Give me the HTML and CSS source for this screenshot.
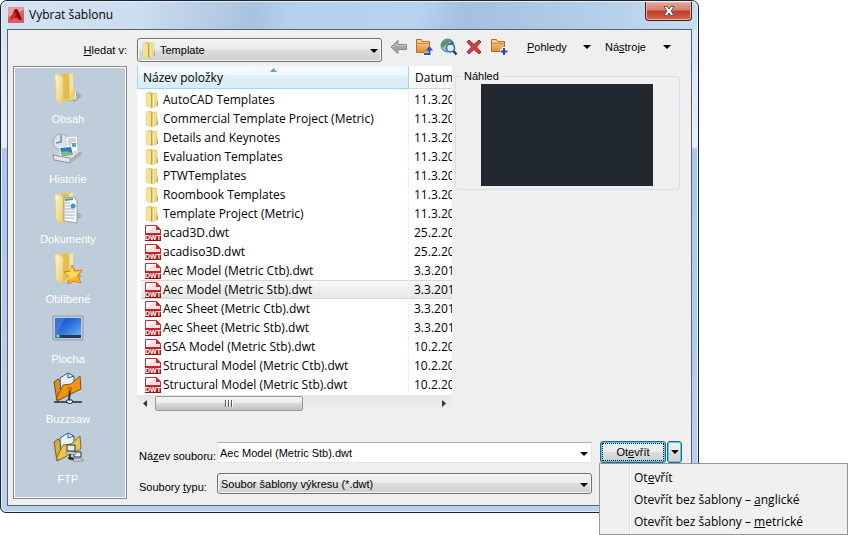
FILE: index.html
```html
<!DOCTYPE html>
<html lang="cs">
<head>
    <meta charset="UTF-8">
    <meta name="viewport" content="width=device-width, initial-scale=1.0">
    <title>Vybrat šablonu</title>
    <link rel="stylesheet" href="styles.css">
</head>
<body>

    <!-- Shared icons -->
    <svg class="sprite" width="0" height="0" aria-hidden="true">
        <defs>
            <linearGradient id="gold" x1="0" y1="0" x2="1" y2="0">
                <stop offset="0" stop-color="#f9edb0"/>
                <stop offset="0.45" stop-color="#dfc057"/>
                <stop offset="1" stop-color="#f7e9a6"/>
            </linearGradient>
            <linearGradient id="front" x1="0" y1="0" x2="1" y2="1">
                <stop offset="0" stop-color="#fdf6cf"/>
                <stop offset="1" stop-color="#e9cc6d"/>
            </linearGradient>
            <linearGradient id="orange" x1="0" y1="0" x2="0" y2="1">
                <stop offset="0" stop-color="#fbd79b"/>
                <stop offset="1" stop-color="#dc8b35"/>
            </linearGradient>
            <linearGradient id="red" x1="0" y1="0" x2="0" y2="1">
                <stop offset="0" stop-color="#c8272d"/>
                <stop offset="1" stop-color="#8e1014"/>
            </linearGradient>
            <linearGradient id="screen" x1="0" y1="0" x2="1" y2="1">
                <stop offset="0" stop-color="#1447b8"/>
                <stop offset="0.5" stop-color="#2f74e0"/>
                <stop offset="1" stop-color="#7db8fa"/>
            </linearGradient>
        </defs>
        <symbol id="folder" viewBox="0 0 16 16">
            <path d="M1 1l5-1 1 1h5v13l-5 2-6-2z" fill="url(#gold)" stroke="#d8bd62" stroke-width=".5"/>
            <path d="M1 1l5 1v14l-5-2z" fill="#f3e293"/>
            <path d="M6.500 2v13" stroke="#c39f38"/>
            <path d="M8.500 2v13" stroke="#fdf6cc"/>
            <path d="M11 7l2 1v6l-4 1.500z" fill="#ead37b"/>
            <path d="M12.500 10v4" stroke="#6db4dc"/>
        </symbol>
        <symbol id="dwt" viewBox="0 0 16 16">
            <path d="M.5.500h11l4 4v11H.5z" fill="#f6dfe0" stroke="#b5353a"/>
            <path d="M11 0v5h5z" fill="#d8272d"/>
            <path d="M1 1h9L1 7z" fill="#fff"/>
            <path d="M0 8h16v8H0z" fill="url(#red)"/>
            <text x="8" y="15" text-anchor="middle" class="dwt-text">DWT</text>
        </symbol>
        <symbol id="big-folder" viewBox="0 0 32 32">
            <path d="M14 28l9 2 7-6-6-5z" fill="#8797a8" opacity=".55"/>
            <path d="M4 2l16-1v25l-10 5-6-4z" fill="url(#gold)"/>
            <path d="M12 2l9-1v24l-9 3z" fill="#e1bd52"/>
            <path d="M17 2l4-1v22l-3 3z" fill="#f5e4a0"/>
            <path d="M3 2l8 3v27l-7-4z" fill="url(#front)" stroke="#e0c46e" stroke-width=".5"/>
            <path d="M21 17l3 2v8l-6 2v-5z" fill="#ecd073"/>
            <path d="M23.500 21v6" stroke="#fff"/>
        </symbol>
        <symbol id="arrow" viewBox="0 0 8 4">
            <path d="M0 0h8L4 4z" fill="#000"/>
        </symbol>
    </svg>

    <div class="dialog">
        <div class="titlebar">
            <svg class="logo" viewBox="0 0 16 16">
                <rect width="16" height="16" fill="#dd5a5e"/>
                <path d="M0 0h16v3L0 10z" fill="#e99a9b"/>
                <path d="M2 13L6.500 2.500h3L14 13h-3l-2-2H6z" fill="#b3171c"/>
                <path d="M2 13l4.500-8L8 8l-2 3z" fill="#d32a2e"/>
                <path d="M6.500 2.500h3L14 13l-4-2z" fill="#7c0b0f"/>
            </svg>
            <h1>Vybrat šablonu</h1>
            <button type="button" class="close" aria-label="Zavřít">
                <svg width="12" height="10" viewBox="0 0 12 10">
                    <path d="M1 .5h3l2 2.500 2-2.500h3L8 5l3 4.500H8L6 7 4 9.500H1L4 5z" fill="#fff" stroke="#5d5b66"/>
                </svg>
            </button>
        </div>

        <div class="client">
            <label class="look-label" for="look"><u>H</u>ledat v:</label>
            <div class="toolbar">
                <div class="combo look">
                    <select id="look">
                        <option>Template</option>
                    </select>
                    <svg class="combo-icon" width="16" height="16"><use href="#folder"/></svg>
                    <svg class="combo-arrow"><use href="#arrow"/></svg>
                </div>
                <div class="tools">
                    <button type="button" aria-label="Zpět">
                        <svg width="18" height="16" viewBox="0 0 18 16"><path d="M1 8l7-6.500v4h8.500v5H8v4z" fill="#a5a5a5" stroke="#868686"/><path d="M3 8l4-3.500v2h9" fill="none" stroke="#c8c8c8"/></svg>
                    </button>
                    <button type="button" aria-label="O úroveň výš">
                        <svg width="18" height="18" viewBox="0 0 18 18"><path d="M1.500 14.500v-13h5l1 2h7v11z" fill="url(#orange)" stroke="#b96a24"/><path d="M2 5.500h12" stroke="#c98645"/><path d="M9 16.500h6v-4" fill="none" stroke="#fff" stroke-width="4"/><path d="M9 16h5.500v-4" fill="none" stroke="#2853b5" stroke-width="2"/><path d="M11 12.500L14.500 8l3.500 4.500z" fill="#2853b5"/></svg>
                    </button>
                    <button type="button" aria-label="Hledat na webu">
                        <svg width="18" height="18" viewBox="0 0 18 18"><circle cx="7.500" cy="7.500" r="6.500" fill="#97b9dd" stroke="#5d7faf"/><path d="M3 4l4-3 3 2-2 3-3 1-2 3-2-3z" fill="#539557"/><path d="M10 1l4 4-3 2z" fill="#3f7d50"/><circle cx="10.500" cy="10" r="4" fill="#dcecfb" stroke="#46658f" stroke-width="1.500"/><path d="M13.500 13l3 3.500" stroke="#173a80" stroke-width="2.500"/></svg>
                    </button>
                    <button type="button" aria-label="Odstranit">
                        <svg width="16" height="16" viewBox="0 0 16 16"><path d="M1 3l2-2 5 4.500L13 1l2 2-4.500 5 4.500 5-2 2-5-4.500L3 15l-2-2 4.500-5z" fill="#cf4146" stroke="#9e2c31"/></svg>
                    </button>
                    <button type="button" aria-label="Nová složka">
                        <svg width="18" height="18" viewBox="0 0 18 18"><path d="M1.500 13.500v-12h5l1 2h7v10z" fill="url(#orange)" stroke="#b96a24"/><path d="M2 5.500h12" stroke="#c98645"/><path d="M14 9v8M10 13h8" stroke="#fff" stroke-width="4"/><path d="M14 10v7M10.500 13.500h7" stroke="#2447a3" stroke-width="2"/></svg>
                    </button>
                </div>
                <button type="button" class="drop views"><span><u>P</u>ohledy</span><svg><use href="#arrow"/></svg></button>
                <button type="button" class="drop"><span>Ná<u>s</u>troje</span><svg><use href="#arrow"/></svg></button>
            </div>

            <nav class="places">
                <button type="button">
                    <svg viewBox="0 0 32 32"><use href="#big-folder"/></svg>
                    <span>Obsah</span>
                </button>
                <button type="button">
                    <svg viewBox="0 0 32 32">
                        <circle cx="9" cy="10" r="8" fill="#d9e5ee" stroke="#a9b8c3" stroke-width="1.500"/>
                        <path d="M9 3v7l-5 1" fill="none" stroke="#7a8b99" stroke-width="1.500"/>
                        <path d="M14 5l11-1 1 18-11 2z" fill="#fff" stroke="#a7afb6" stroke-width=".5"/>
                        <path d="M16 7h7M16 9h8M16 11h4M16 13h3" stroke="#a1a8b2"/>
                        <path d="M20 11h4v4h-4z" fill="#52a8b4"/>
                        <path d="M2 24l24-5 4 2-9 8-3 2L2 28z" fill="#8f979b"/>
                        <path d="M2 23l7-4h20l-10 8z" fill="#d3d8da"/>
                        <path d="M7 15l13-1 2 10-13 1z" fill="#fff"/>
                        <path d="M8 16l11-1 2 8-11 1z" fill="#287fc8"/>
                        <path d="M9 20l6-1 5 2 1 2-11 1z" fill="#88bc74"/>
                        <path d="M1 23l17 3v5L2 28z" fill="#e4e7e8" stroke="#8c9498"/>
                        <path d="M18 27l11-7v3l-11 8z" fill="#aab1b5"/>
                    </svg>
                    <span>Historie</span>
                </button>
                <button type="button">
                    <svg viewBox="0 0 32 32">
                        <use href="#big-folder"/>
                        <path d="M12 6l10-1 3 4v22l-13-2z" fill="#fafbfb" stroke="#9b9ea0"/>
                        <path d="M13 8l8-1" stroke="#4e9a8e" stroke-width="2"/>
                        <path d="M13 11h5M13 14h5M13 17h10M13 20h10M13 23h10M13 26h9" stroke="#a4b1ba"/>
                        <circle cx="21" cy="14" r="2.500" fill="#4695c8"/>
                    </svg>
                    <span>Dokumenty</span>
                </button>
                <button type="button">
                    <svg viewBox="0 0 32 32">
                        <use href="#big-folder"/>
                        <path d="M20 13l3 6 7-1-4 6 3 7-7-2-6 3 1-7-5-5 7-1z" fill="#ffb52b" stroke="#d97a15"/>
                        <path d="M20 15l2 6 6-2-4 5-8 4 1-4-4-3 5-1z" fill="#ffdc65"/>
                    </svg>
                    <span>Oblíbené</span>
                </button>
                <button type="button">
                    <svg viewBox="0 0 32 32">
                        <path d="M1 4h30v24H1z" fill="#c4cad8" stroke="#8f99b0"/>
                        <path d="M3 6h26v20H3z" fill="url(#screen)"/>
                        <path d="M3 6h10L5 22H3z" fill="#5d92eb" opacity=".5"/>
                        <path d="M3 23h26v3H3z" fill="#263b58"/>
                        <circle cx="5.500" cy="24" r="2.500" fill="#2f9bb6"/>
                        <path d="M5 23h2v2H5z" fill="#c4d34a"/>
                    </svg>
                    <span>Plocha</span>
                </button>
                <button type="button">
                    <svg viewBox="0 0 32 32">
                        <path d="M2 10l4-3 2 2 4-1v17l-7 4z" fill="#d9901f" stroke="#7c4b0c"/>
                        <path d="M8 6l8-5 6 3v14L9 24z" fill="#e7f2f8" stroke="#31627c"/>
                        <path d="M16 1v5l6-2" fill="none" stroke="#31627c"/>
                        <path d="M28 4l1 13-22 11-3-1 7-14 8-1z" fill="#f09413" stroke="#89500c"/>
                        <path d="M18 17l-1 11" stroke="#273a66" stroke-width="2"/>
                        <path d="M16 15h4v4h-4z" fill="#c47212"/>
                        <path d="M2 30h28" stroke="#15294f" stroke-width="1.500"/>
                        <path d="M15 28h5l1 2-3 2-4-2z" fill="#eef2f4" stroke="#222"/>
                    </svg>
                    <span>Buzzsaw</span>
                </button>
                <button type="button">
                    <svg viewBox="0 0 32 32">
                        <path d="M2 10l4-3 2 2 4-1v17l-7 4z" fill="#d8ad35" stroke="#79601b"/>
                        <path d="M8 6l8-5 6 3v14L9 24z" fill="#e7f2f8" stroke="#31627c"/>
                        <path d="M16 1v5l6-2" fill="none" stroke="#31627c"/>
                        <path d="M28 4l1 13-22 11-3-1 7-14 8-1z" fill="#e9c552" stroke="#8a6b1d"/>
                        <path d="M15 13h8v6h-8zM22 20h7v5h-7z" fill="#dfeefa" stroke="#2a3440"/>
                        <path d="M14 20h10v2H14zM21 27h10v2H21z" fill="#eee" stroke="#39424c" stroke-width=".5"/>
                        <path d="M18 22v5h4M16 26h5" fill="none" stroke="#222" stroke-width="1.500"/>
                    </svg>
                    <span>FTP</span>
                </button>
            </nav>

            <div class="main">
                <div class="browse">
                    <div class="files">
                        <div class="files-view">
                            <table>
                                <thead>
                                    <tr>
                                        <th class="sorted">Název položky<svg class="sort" viewBox="0 0 7 4"><path d="M0 4l3.500-4L7 4z" fill="#6aa3c8"/></svg></th>
                                        <th>Datum</th>
                                    </tr>
                                </thead>
                                <tbody>
                                    <tr><td><svg><use href="#folder"/></svg>AutoCAD Templates</td><td>11.3.2015</td></tr>
                                    <tr><td><svg><use href="#folder"/></svg>Commercial Template Project (Metric)</td><td>11.3.2015</td></tr>
                                    <tr><td><svg><use href="#folder"/></svg>Details and Keynotes</td><td>11.3.2015</td></tr>
                                    <tr><td><svg><use href="#folder"/></svg>Evaluation Templates</td><td>11.3.2015</td></tr>
                                    <tr><td><svg><use href="#folder"/></svg>PTWTemplates</td><td>11.3.2015</td></tr>
                                    <tr><td><svg><use href="#folder"/></svg>Roombook Templates</td><td>11.3.2015</td></tr>
                                    <tr><td><svg><use href="#folder"/></svg>Template Project (Metric)</td><td>11.3.2015</td></tr>
                                    <tr><td><svg><use href="#dwt"/></svg>acad3D.dwt</td><td>25.2.2015</td></tr>
                                    <tr><td><svg><use href="#dwt"/></svg>acadiso3D.dwt</td><td>25.2.2015</td></tr>
                                    <tr><td><svg><use href="#dwt"/></svg>Aec Model (Metric Ctb).dwt</td><td>3.3.2015</td></tr>
                                    <tr class="selected"><td><svg><use href="#dwt"/></svg>Aec Model (Metric Stb).dwt</td><td>3.3.2015</td></tr>
                                    <tr><td><svg><use href="#dwt"/></svg>Aec Sheet (Metric Ctb).dwt</td><td>3.3.2015</td></tr>
                                    <tr><td><svg><use href="#dwt"/></svg>Aec Sheet (Metric Stb).dwt</td><td>3.3.2015</td></tr>
                                    <tr><td><svg><use href="#dwt"/></svg>GSA Model (Metric Stb).dwt</td><td>10.2.2015</td></tr>
                                    <tr><td><svg><use href="#dwt"/></svg>Structural Model (Metric Ctb).dwt</td><td>10.2.2015</td></tr>
                                    <tr><td><svg><use href="#dwt"/></svg>Structural Model (Metric Stb).dwt</td><td>10.2.2015</td></tr>
                                </tbody>
                            </table>
                        </div>
                        <div class="scrollbar">
                            <svg viewBox="0 0 4 7"><path d="M4 0v7L0 3.500z" fill="#333"/></svg>
                            <div class="track"><div class="thumb"></div></div>
                            <svg viewBox="0 0 4 7"><path d="M0 0v7l4-3.500z" fill="#333"/></svg>
                        </div>
                    </div>
                    <fieldset class="preview">
                        <legend>Náhled</legend>
                        <div class="preview-image"></div>
                    </fieldset>
                </div>

                <form class="choose">
                    <label for="filename">Ná<u>z</u>ev souboru:</label>
                    <div class="combo">
                        <input type="text" id="filename" value="Aec Model (Metric Stb).dwt">
                        <svg class="combo-arrow"><use href="#arrow"/></svg>
                    </div>
                    <div class="split">
                        <button type="button" class="open"><span>Ot<u>e</u>vřít</span></button>
                        <button type="button" class="open-more" aria-label="Další možnosti"><svg><use href="#arrow"/></svg></button>
                        <div class="menu" role="menu">
                            <button type="button" role="menuitem">Ot<u>e</u>vřít</button>
                            <button type="button" role="menuitem">Otevřít bez šablony – <u>a</u>nglické</button>
                            <button type="button" role="menuitem">Otevřít bez šablony – <u>m</u>etrické</button>
                        </div>
                    </div>
                    <label for="filetype">Soubory <u>t</u>ypu:</label>
                    <div class="combo">
                        <select id="filetype">
                            <option>Soubor šablony výkresu (*.dwt)</option>
                        </select>
                        <svg class="combo-arrow"><use href="#arrow"/></svg>
                    </div>
                </form>
            </div>
        </div>
    </div>

</body>
</html>
```

FILE: styles.css
```css
* {
    box-sizing: border-box;
}
body {
    min-height: 100vh;
    margin: 0;
    padding: 0 149px 22px 0;
    background: #fff;
    color: #000;
    font-family: "Liberation Sans", Arial, sans-serif;
    font-size: 11px;
}
button, input, select {
    margin: 0;
    padding: 0;
    border: none;
    background: none;
    color: inherit;
    font: inherit;
}
svg {
    display: block;
    flex: none;
}
.sprite {
    position: absolute;
}
.dwt-text {
    font: bold 7px "Liberation Sans", sans-serif;
    fill: #fff;
}

/* Window frame */
.dialog {
    padding: 0 6px 6px;
    border: 1px solid #1d2430;
    border-radius: 7px 7px 6px 6px;
    background: linear-gradient(#d3e3f4, #e6eff9 146px, #a9c8e8 148px, #b9d3ee);
    box-shadow: inset 0 0 0 1px #e3eefa;
}
.titlebar {
    display: flex;
    height: 28px;
    margin: 0 -5px;
    padding: 0 0 0 6px;
    background: linear-gradient(100deg, #d3e3f3, #cbddef 20%, #a9c3df 36%, #b6d1ec 42%, #b8d3ee 60%, #a5c0df 66%, #b1cce8 82%, #c6dcf2);
    border-top: 1px solid #e3eefa;
    border-radius: 6px 6px 0 0;
}
.logo {
    width: 16px;
    height: 16px;
    margin-top: 5px;
}
.titlebar h1 {
    flex: 1;
    margin: 0;
    padding-left: 5px;
    font: 12px/26px "Open Sans", sans-serif;
}
.close {
    display: flex;
    align-items: center;
    justify-content: center;
    width: 47px;
    height: 19px;
    margin-right: 5px;
    border: 1px solid #4d1a1c;
    border-top: none;
    border-radius: 0 0 4px 4px;
    background: linear-gradient(#e3a79b, #d57f70 45%, #bd3a26 50%, #d4694a);
    box-shadow: inset 0 0 0 1px #e8b5aa;
}
.client {
    display: grid;
    grid-template-columns: 114px 1fr;
    column-gap: 10px;
    padding: 0 9px 6px 5px;
    border: 1px solid #59636f;
    background: #efefef;
}

/* Top row */
.look-label {
    padding-top: 13px;
    text-align: right;
    line-height: 14px;
}
.toolbar {
    display: flex;
    align-items: center;
    height: 36px;
    padding: 8px 0 4px;
}
.look {
    flex: 1;
}
.tools {
    display: flex;
    gap: 1px;
    margin: -6px 0 0 5px;
}
.tools button {
    display: flex;
    align-items: center;
    justify-content: center;
    width: 24px;
    height: 24px;
}
.drop {
    display: flex;
    align-items: center;
    justify-content: space-between;
    width: 66px;
    margin: -6px 11px 0 0;
}
.views {
    width: 64px;
    margin: -6px 14px 0 16px;
}
.drop svg, .open-more svg, .combo-arrow {
    width: 8px;
    height: 4px;
}

/* Combo boxes */
.combo {
    position: relative;
}
.combo select, .combo input {
    display: block;
    width: 100%;
    height: 21px;
    padding-left: 3px;
    appearance: none;
}
.combo select {
    border: 1px solid #707070;
    border-radius: 3px;
    background: linear-gradient(#f2f2f2, #ebebeb 50%, #dddddd 50%, #cfcfcf);
    box-shadow: inset 0 0 0 1px #f8f8f8;
}
.combo input {
    border: 1px solid #e3e3e3;
    border-top-color: #abadb3;
    padding-left: 2px;
    background: #fff;
}
.look select {
    height: 24px;
    padding-left: 22px;
}
.combo-icon {
    position: absolute;
    top: 4px;
    left: 5px;
}
.combo-arrow {
    position: absolute;
    top: 50%;
    right: 4px;
    margin-top: -1px;
}

/* Places bar */
.places {
    padding: 5px 4px 0 0;
    border: 1px solid #828790;
    background: #bfccd9;
    box-shadow: inset 0 0 0 1px #fff;
}
.places button {
    display: flex;
    flex-direction: column;
    align-items: center;
    justify-content: flex-start;
    gap: 8px;
    width: 100%;
    height: 60px;
    color: #fff;
    line-height: 14px;
}
.places svg {
    width: 32px;
    height: 32px;
}

/* File list */
.browse {
    display: flex;
    align-items: flex-start;
    gap: 3px;
}
.files {
    flex: 1;
    min-width: 0;
    font-family: "Open Sans", sans-serif;
    font-size: 12px;
}
.files-view {
    overflow: hidden;
    background: #fff;
}
.files table {
    width: 120%;
    table-layout: fixed;
    border-collapse: separate;
    border-spacing: 0;
}
.files th {
    position: relative;
    height: 23px;
    padding: 0 6px;
    border-bottom: 1px solid #d5d5d5;
    background: linear-gradient(#fff 50%, #f6f7f8 50%);
    font-weight: normal;
    text-align: left;
}
.files .sorted {
    width: 272px;
    border: 1px solid #96d9f9;
    border-top: none;
    padding-left: 5px;
    background: linear-gradient(#f2f9fc 40%, #e1f1f9 40%, #d8ecf6);
}
.sort {
    position: absolute;
    top: 2px;
    left: 49%;
    width: 7px;
    height: 4px;
}
.files tbody::before {
    content: "";
    display: block;
    height: 1px;
}
.files tbody::after {
    content: "";
    display: block;
    height: 1px;
}
.files td {
    height: 19px;
    padding: 0 5px;
    border-right: 1px solid #e9f3fb;
    line-height: 19px;
    white-space: nowrap;
}
.files td:first-child {
    padding: 0 0 0 26px;
}
.files td svg {
    float: left;
    width: 16px;
    height: 16px;
    margin: 2px 0 0 -18px;
}
.selected td {
    background: linear-gradient(#d9d9d9 1px, #f8f8f8 1px, #e6e6e6 18px, #d4d4d4 18px);
}
.selected td:first-child {
    background-position: 4px 0;
    background-repeat: no-repeat;
}
.scrollbar {
    display: flex;
    align-items: center;
    height: 16px;
    padding: 0 6px;
    background: linear-gradient(#e6e6e6, #f0f0f0);
}
.scrollbar svg {
    width: 4px;
    height: 7px;
}
.track {
    flex: 1;
    padding: 0 8px;
}
.thumb {
    display: flex;
    align-items: center;
    justify-content: center;
    width: 53%;
    height: 15px;
    border: 1px solid #979797;
    border-radius: 2px;
    background: linear-gradient(#f5f5f5, #e9e9eb 50%, #d9dadc 50%, #c0c0c4);
}
.thumb::before {
    content: "";
    width: 8px;
    height: 7px;
    background: repeating-linear-gradient(90deg, #55585c 0 1px, #fff 1px 2px, transparent 2px 3px);
}

/* Preview */
.preview {
    width: 225px;
    height: 120px;
    margin: 4px 2px 0 0;
    padding: 0 2px 0 0;
    border: 1px solid #d5dfe5;
    border-radius: 3px;
}
.preview legend {
    margin-left: 6px;
    padding: 0 2px;
    line-height: 13px;
}
.preview-image {
    width: 172px;
    height: 102px;
    margin: 1px auto 0;
    background: #222830;
}

/* Name, type and buttons */
.choose {
    display: grid;
    grid-template-columns: 80px 1fr 82px;
    row-gap: 10px;
    align-items: end;
    margin: 30px 0 5px;
}
.choose label {
    padding-left: 2px;
    line-height: 14px;
}
.choose .combo {
    margin-right: 8px;
}
.split {
    position: relative;
    display: flex;
    gap: 1px;
    height: 22px;
}
.open, .open-more {
    display: flex;
    align-items: center;
    justify-content: center;
    border: 1px solid #2c628b;
    border-radius: 3px;
    background: linear-gradient(#f2f2f2, #ebebeb 50%, #dcdcdc 50%, #cfcfcf);
    box-shadow: inset 0 0 0 1px #46d2f5;
}
.open {
    flex: 1;
    padding: 1px;
}
.open span {
    flex: 1;
    border: 1px dotted #000;
    line-height: 16px;
}
.open-more {
    width: 15px;
}
.menu {
    position: absolute;
    top: 100%;
    left: -1px;
    width: 249px;
    padding: 2px;
    border: 1px solid #979797;
    background: linear-gradient(90deg, transparent 29px, #e0e0e0 29px 30px, #fff 30px 31px, transparent 31px) 0 0 no-repeat #f0f0f0;
}
.menu button {
    display: block;
    width: 100%;
    height: 22px;
    padding-left: 32px;
    font-family: "Open Sans", sans-serif;
    font-size: 12px;
    text-align: left;
}
```
